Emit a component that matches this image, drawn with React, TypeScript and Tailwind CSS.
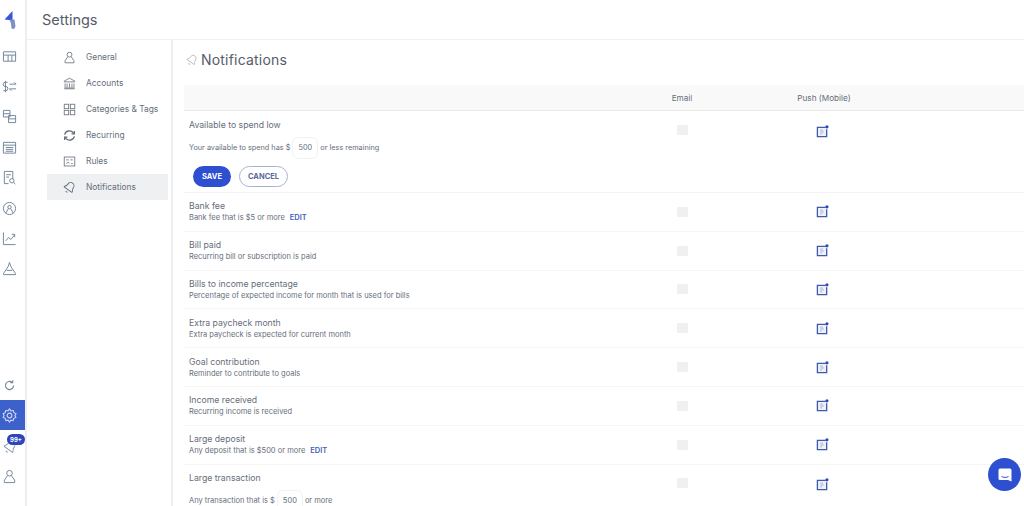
import { ReactNode } from 'react';

const iconProps = {
  fill: 'none',
  stroke: 'currentColor',
  strokeWidth: 1,
  viewBox: '0 0 16 16',
};

function Person({ className }: { className: string }) {
  return (
    <svg {...iconProps} className={className}>
      <circle cx="8" cy="4.5" r="3" />
      <path d="M5.8 7.2 2.5 12v2.5h11V12L10.2 7.2" />
    </svg>
  );
}

function Bank({ className }: { className: string }) {
  return (
    <svg {...iconProps} className={className}>
      <path d="M8 1.5 1.5 5v1h13V5zM2.5 8v5M5 8v5M8 8v5M11 8v5M13.5 8v5M1.5 14.5h13M2 13.5h12" />
    </svg>
  );
}

function Squares({ className }: { className: string }) {
  return (
    <svg {...iconProps} className={className}>
      <rect x="1.5" y="1.5" width="5.5" height="5.5" />
      <rect x="9" y="1.5" width="5.5" height="5.5" />
      <rect x="1.5" y="9" width="5.5" height="5.5" />
      <rect x="9" y="9" width="5.5" height="5.5" />
    </svg>
  );
}

function Recur({ className }: { className: string }) {
  return (
    <svg {...iconProps} strokeWidth={1.6} className={className}>
      <path d="M2 7a6 6 0 0 1 10.5-2.5L14 6M14 9a6 6 0 0 1-10.5 2.5L2 10" />
      <path d="M14 2.5V6h-3.5M2 13.5V10h3.5" />
    </svg>
  );
}

function Rules({ className }: { className: string }) {
  return (
    <svg {...iconProps} className={className}>
      <rect x="1.5" y="2.5" width="13" height="11" />
      <path d="M4 6h3M9 6h3M4 10.5l2-1.5 2 1M10 10.5h2" />
    </svg>
  );
}

// tilted bell, used for notifications everywhere
function Bell({ className }: { className: string }) {
  return (
    <svg viewBox="0 0 24 24" fill="none" stroke="currentColor" strokeWidth={1.7} className={`rotate-[35deg] ${className}`}>
      <path d="M10.268 21a2 2 0 0 0 3.464 0" />
      <path d="M3.262 15.326A1 1 0 0 0 4 17h16a1 1 0 0 0 .74-1.673C19.41 13.956 18 12.499 18 8A6 6 0 0 0 6 8c0 4.499-1.411 5.956-2.738 7.326" />
    </svg>
  );
}

function PushIcon() {
  return (
    <svg viewBox="0 0 14 14" className="h-[13px] w-[13px] text-[#3f5aa8]" fill="none" stroke="currentColor">
      <path d="M10.5 2.5H1.5v10h10v-8" strokeWidth="1.4" fill="#eef1fa" />
      <path d="M4.5 5.5h3M4.5 7.5h4M4.5 9.5h2" strokeWidth="0.7" opacity="0.6" />
      <circle cx="11.8" cy="2" r="1.7" fill="#2d46b9" stroke="none" />
    </svg>
  );
}

function RailIcon({ children }: { children: ReactNode }) {
  return (
    <div className="flex h-[30.4px] items-center justify-center pr-[6px] text-[#6d8299]">
      <svg {...iconProps} className="h-[15px] w-[15px]">
        {children}
      </svg>
    </div>
  );
}

const menu = [
  { label: 'General', Icon: Person },
  { label: 'Accounts', Icon: Bank },
  { label: 'Categories & Tags', Icon: Squares },
  { label: 'Recurring', Icon: Recur },
  { label: 'Rules', Icon: Rules },
  { label: 'Notifications', Icon: Bell, active: true },
];

const rows = [
  { title: 'Bank fee', text: 'Bank fee that is $5 or more', edit: true },
  { title: 'Bill paid', text: 'Recurring bill or subscription is paid' },
  { title: 'Bills to income percentage', text: 'Percentage of expected income for month that is used for bills' },
  { title: 'Extra paycheck month', text: 'Extra paycheck is expected for current month' },
  { title: 'Goal contribution', text: 'Reminder to contribute to goals' },
  { title: 'Income received', text: 'Recurring income is received' },
  { title: 'Large deposit', text: 'Any deposit that is $500 or more', edit: true },
];

function Checks() {
  return (
    <>
      <div className="flex w-[140px] shrink-0 justify-center">
        <div className="h-[10px] w-[11px] rounded-[1px] bg-[#f0f0f0]" />
      </div>
      <div className="flex w-[140px] shrink-0 justify-center">
        <PushIcon />
      </div>
    </>
  );
}

function AmountBox() {
  return (
    <span className="mx-[2px] inline-flex h-[22px] w-[26px] items-center justify-center rounded-[6px] border border-[#f3f3f3] text-[#666e7a]">
      500
    </span>
  );
}

export default function App() {
  return (
    <div className="flex h-[506px] w-[1024px] overflow-hidden bg-white font-['Inter',sans-serif] text-[#666e7a]">
      <aside className="relative flex w-[27px] shrink-0 flex-col border-r-2 border-[#eeeeee]">
        <div className="flex h-[40px] items-center justify-center pr-[6px]">
          <svg viewBox="0 0 14 20" className="h-[20px] w-[14px]">
            <path d="M9.5 1v9.5L1.5 9.5z" fill="#3557d8" />
            <path d="M6.5 9.5h5l1 7-1.5 2.5-2.5-.5-.5-5z" fill="#7d8fc9" />
          </svg>
        </div>
        <div className="mt-[1px] flex flex-col">
          <RailIcon>
            <path d="M1.5 3h13v10h-13zM1.5 6.5h13M6.5 6.5V13M10.5 6.5V13" />
          </RailIcon>
          <RailIcon>
            <path d="M6 3.5H3.5a1.7 1.7 0 0 0 0 4.5H4a1.7 1.7 0 0 1 0 4.5H1.5M3.7 2v12M8 5.5h7l-2-2M15 10.5H8l2 2" />
          </RailIcon>
          <RailIcon>
            <path d="M1.5 1.5h7v7h-7zM7 7h7.5v7.5H7zM1.5 5h7M7 10.5h7.5" />
          </RailIcon>
          <RailIcon>
            <path d="M1.5 2.5h13v11.5h-13zM1.5 5.5h13M4 8h8M4 10h8M4 12h8" />
          </RailIcon>
          <RailIcon>
            <path d="M2.5 1.5h9v8M7 14.5H2.5v-13M4.5 5h5M4.5 7.5h3" />
            <circle cx="10.5" cy="11.5" r="2.3" />
            <path d="m12.3 13.2 2 1.8" />
          </RailIcon>
          <RailIcon>
            <circle cx="8" cy="8" r="6.5" />
            <circle cx="8" cy="6.5" r="1.8" />
            <path d="M4 13l2.8-5M12 13 9.2 8" />
          </RailIcon>
          <RailIcon>
            <path d="M1.5 1.5v13h13M4 10.5 7 7l2.5 2 4-5M10.5 3.5h3v3" />
          </RailIcon>
          <RailIcon>
            <path d="M8 1.5 9.5 6l5 7.5v1h-13v-1L6.5 6zM5 10h6" />
          </RailIcon>
        </div>
        <div className="mb-[15px] mt-auto flex flex-col">
          <div className="flex h-[30px] items-center justify-center pr-[6px] text-[#7a8794]">
            <svg {...iconProps} strokeWidth={1.4} className="h-[13px] w-[13px]">
              <path d="M13 8a5 5 0 1 1-1.5-3.6M12 1.5v3H9" />
            </svg>
          </div>
          <div className="flex h-[30px] items-center justify-center bg-[#3d61cb] pr-[6px] text-[#c8d6f5]">
            <svg {...iconProps} strokeWidth={1.2} className="h-[15px] w-[15px]">
              <path d="M8 1 9.5 3l2.5-.3.7 2.3 2.3 1.2L13.8 8l1 2-2.2 1-.7 2.4L9.5 13 8 15l-1.5-2-2.4.4-.7-2.4-2.2-1 1-2-1-1.8L3.3 5 4 2.7 6.5 3z" />
              <circle cx="8" cy="8" r="2.5" />
            </svg>
          </div>
          <div className="flex h-[31px] items-center justify-center pr-[6px] pt-[3px] text-[#8a97a5]">
            <Bell className="h-[14px] w-[14px]" />
          </div>
          <div className="flex h-[30px] items-center justify-center pr-[6px] text-[#6d8299]">
            <Person className="h-[15px] w-[15px]" />
          </div>
        </div>
        <span className="absolute left-[7px] top-[434px] flex h-[11px] w-[18px] items-center justify-center rounded-full bg-[#2d46b9] text-[6px] font-bold leading-none text-white">
          99+
        </span>
      </aside>

      <div className="flex min-w-0 flex-1 flex-col">
        <header className="flex h-[40px] shrink-0 items-center border-b border-[#f0f0f0] pl-[15px] text-[14.5px] text-[#555d69]">
          Settings
        </header>
        <div className="flex min-h-0 flex-1">
          <nav className="w-[146px] shrink-0 border-r-2 border-[#eeeeee] pl-[20px] pt-[4px]">
            {menu.map(({ label, Icon, active }) => (
              <div
                key={label}
                className={`flex h-[26px] w-[121px] items-center text-[8.4px] ${active ? 'bg-[#eef0f2]' : ''}`}
              >
                <span className="flex w-[39px] shrink-0 justify-center pl-[6px] text-[#666e7a]">
                  <Icon className="h-[13px] w-[13px]" />
                </span>
                {label}
              </div>
            ))}
          </nav>
          <main className="min-w-0 flex-1 pl-[11px]">
            <div className="flex h-[45px] items-center pb-[6px] pl-[2px] text-[14px] tracking-[0.2px] text-[#555d69]">
              <Bell className="mr-[3px] h-[12px] w-[12px] text-[#b5bac0]" />
              Notifications
            </div>
            <div className="flex h-[26px] items-center border-b border-[#e8e8e8] bg-[#f9f9f9] pt-[2px] text-[8.2px]">
              <div className="w-[428px] shrink-0" />
              <div className="w-[140px] shrink-0 text-center">Email</div>
              <div className="w-[140px] shrink-0 pl-[4px] text-center">Push (Mobile)</div>
            </div>
            <div className="h-[82px] border-b border-[#f3f3f3]">
              <div className="flex h-[28px] items-start pt-[9px]">
                <div className="w-[428px] shrink-0 pl-[5px] text-[8.7px] leading-[11px]">Available to spend low</div>
                <div className="mt-[5px] flex">
                  <Checks />
                </div>
              </div>
              <div className="-mt-[2px] flex h-[22px] items-center pl-[5px] text-[7.3px]">
                Your available to spend has $
                <AmountBox />
                or less remaining
              </div>
              <div className="mt-[7px] flex gap-[8px] pl-[9px]">
                <button className="h-[21px] w-[38px] rounded-full bg-[#2d4fd0] text-[7.5px] font-bold text-white">
                  SAVE
                </button>
                <button className="h-[21px] w-[49px] rounded-full border border-[#a9b3cf] text-[7.5px] font-bold text-[#5a6b9c]">
                  CANCEL
                </button>
              </div>
            </div>
            {rows.map((row) => (
              <div key={row.title} className="flex h-[38.8px] items-center border-b border-[#f5f5f5]">
                <div className="w-[428px] shrink-0 pl-[5px]">
                  <div className="text-[8.7px] leading-[12px]">{row.title}</div>
                  <div className="text-[7.5px] leading-[11px]">
                    {row.text}
                    {row.edit && <span className="ml-[5px] font-semibold text-[#3f5fbd]">EDIT</span>}
                  </div>
                </div>
                <Checks />
              </div>
            ))}
            <div className="flex items-start pt-[7px]">
              <div className="w-[428px] shrink-0 pl-[5px]">
                <div className="text-[8.7px] leading-[12px]">Large transaction</div>
                <div className="mt-[6px] flex items-center text-[7.5px]">
                  Any transaction that is $
                  <AmountBox />
                  or more
                </div>
              </div>
              <div className="mt-[6px] flex">
                <Checks />
              </div>
            </div>
          </main>
        </div>
      </div>

      <div className="fixed left-[988px] top-[458px] flex h-[33px] w-[33px] items-center justify-center rounded-full bg-[#2d4fd0]">
        <svg viewBox="0 0 16 16" className="h-[16px] w-[16px]">
          <path d="M3 1.5h10a1.5 1.5 0 0 1 1.5 1.5v11.5L11 13H3a1.5 1.5 0 0 1-1.5-1.5V3A1.5 1.5 0 0 1 3 1.5z" fill="#fff" />
          <path d="M4.5 9.5c2 1.2 5 1.2 7 0" stroke="#2d4fd0" strokeWidth="1" fill="none" />
        </svg>
      </div>
    </div>
  );
}
